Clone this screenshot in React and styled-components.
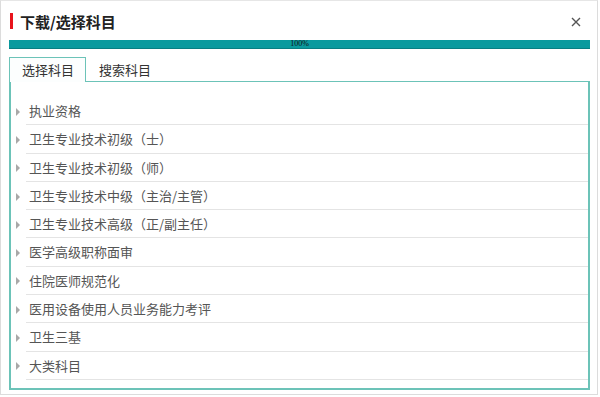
import React from 'react';
import styled, { createGlobalStyle } from 'styled-components';

const GlobalStyle = createGlobalStyle`
body {
  margin: 0;
  background: #fff;
  font-family: "Microsoft YaHei", "Noto Sans CJK SC", "Noto Sans", sans-serif;
}
`;

const Dialog = styled.div`
box-sizing: border-box;
width: 598px;
height: 395px;
border: 1px solid #dcdcdc;
border-top-color: #e6e6e6;
background: #fff;
padding: 0 8px;
overflow: hidden;
`;
const TitleBar = styled.div`
display: flex;
align-items: center;
height: 38px;
padding-left: 1px;
`;
const RedMark = styled.span`
width: 3px;
height: 16px;
background: #e8141c;
margin-right: 7px;
margin-top: 2px;
`;
const Title = styled.h1`
flex: 1;
margin: 0;
font-size: 15px;
font-weight: 700;
color: #222;
padding-top: 2px;
`;
const Close = styled.button`
border: none;
background: none;
padding: 0;
margin-right: 6px;
margin-top: 4px;
width: 14px;
height: 14px;
display: flex;
align-items: center;
justify-content: center;
cursor: pointer;
`;
const Progress = styled.div`
box-sizing: border-box;
width: 581px;
height: 9px;
margin-top: 1px;
background: #0a9a9e;
border-bottom: 1px solid #087e82;
color: #111;
font-family: "Liberation Serif", serif;
font-size: 8px;
line-height: 8px;
text-align: center;
`;
const Tabs = styled.div`
display: flex;
margin-top: 8px;
height: 24px;
`;
const Tab = styled.div`
box-sizing: border-box;
height: ${p => (p.$active ? '25px' : '24px')};
padding: 0 11px 0 12px;
font-size: 13px;
line-height: 24px;
color: #333;
background: ${p => (p.$active ? '#fcfefe' : 'transparent')};
border: 1px solid ${p => (p.$active ? '#6cc3b8' : 'transparent')};
border-bottom: none;
position: relative;
z-index: 1;
`;
const Panel = styled.div`
box-sizing: border-box;
width: 581px;
height: 309px;
border: 2px solid #6cc3b8;
border-top-width: 1px;
padding: 15px 0 0 5px;
`;
const List = styled.ul`
list-style: none;
margin: 0;
padding: 0;
`;
const Item = styled.li`
display: flex;
align-items: stretch;
height: 28.3px;
`;
const Arrow = styled.span`
width: 10px;
display: flex;
align-items: center;
padding-top: 1px;
&::before {
  content: "";
  border-left: 4px solid #a8a8a8;
  border-top: 4px solid transparent;
  border-bottom: 4px solid transparent;
}
`;
const Label = styled.span`
flex: 1;
box-sizing: border-box;
padding-left: 3px;
font-size: 13px;
line-height: 27px;
color: #555;
border-bottom: 1px solid #e4e4e4;
`;

const subjects = [
  '执业资格',
  '卫生专业技术初级（士）',
  '卫生专业技术初级（师）',
  '卫生专业技术中级（主治/主管）',
  '卫生专业技术高级（正/副主任）',
  '医学高级职称面审',
  '住院医师规范化',
  '医用设备使用人员业务能力考评',
  '卫生三基',
  '大类科目',
];

const App = () => (
  <>
    <GlobalStyle />
    <Dialog>
      <TitleBar>
        <RedMark />
        <Title>下载/选择科目</Title>
        <Close aria-label="关闭">
          <svg width="10" height="10" viewBox="0 0 10 10">
            <path d="M1 1L9 9M9 1L1 9" stroke="#555" strokeWidth="1.4" />
          </svg>
        </Close>
      </TitleBar>
      <Progress>100%</Progress>
      <Tabs>
        <Tab $active>选择科目</Tab>
        <Tab>搜索科目</Tab>
      </Tabs>
      <Panel>
        <List>
          {subjects.map(s => (
            <Item key={s}>
              <Arrow />
              <Label>{s}</Label>
            </Item>
          ))}
        </List>
      </Panel>
    </Dialog>
  </>
);

export default App;
